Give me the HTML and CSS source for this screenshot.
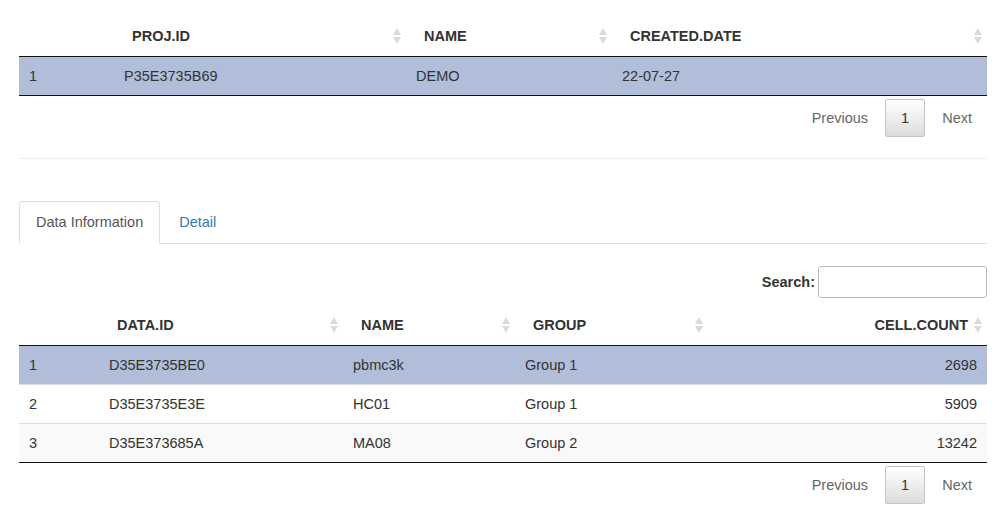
FILE: index.html
```html
<!DOCTYPE html>
<html lang="en">
<head>
<meta charset="utf-8">
<title>Project</title>
<link rel="stylesheet" href="styles.css">
</head>
<body>
<div class="page">
  <div class="dt-wrapper">
    <table class="dt dt-proj">
      <colgroup><col class="c-p0"><col class="c-p1"><col class="c-p2"><col class="c-p3"></colgroup>
      <thead>
        <tr><th></th><th class="sort">PROJ.ID</th><th class="sort">NAME</th><th class="sort">CREATED.DATE</th></tr>
      </thead>
      <tbody>
        <tr class="selected"><td>1</td><td>P35E3735B69</td><td>DEMO</td><td>22-07-27</td></tr>
      </tbody>
    </table>
    <div class="paging">
      <span class="pg-btn disabled">Previous</span>
      <span class="pg-btn current">1</span>
      <span class="pg-btn disabled">Next</span>
    </div>
  </div>

  <hr class="sep">

  <ul class="tabs">
    <li class="tab active"><a>Data Information</a></li>
    <li class="tab"><a>Detail</a></li>
  </ul>

  <div class="tab-content">
    <div class="dt-wrapper">
      <div class="filter">
        <label class="filter-label">Search:</label>
        <input class="filter-input" type="search">
      </div>
      <table class="dt dt-data">
        <colgroup><col class="c-d0"><col class="c-d1"><col class="c-d2"><col class="c-d3"><col class="c-d4"></colgroup>
        <thead>
          <tr><th></th><th class="sort">DATA.ID</th><th class="sort">NAME</th><th class="sort">GROUP</th><th class="sort num">CELL.COUNT</th></tr>
        </thead>
        <tbody>
          <tr class="selected"><td>1</td><td>D35E3735BE0</td><td>pbmc3k</td><td>Group 1</td><td class="num">2698</td></tr>
          <tr class="even"><td>2</td><td>D35E3735E3E</td><td>HC01</td><td>Group 1</td><td class="num">5909</td></tr>
          <tr class="odd"><td>3</td><td>D35E373685A</td><td>MA08</td><td>Group 2</td><td class="num">13242</td></tr>
        </tbody>
      </table>
      <div class="paging">
        <span class="pg-btn disabled">Previous</span>
        <span class="pg-btn current">1</span>
        <span class="pg-btn disabled">Next</span>
      </div>
    </div>
  </div>
</div>
</body>
</html>
```
FILE: styles.css
```css
* { box-sizing: border-box; }

html, body {
  margin: 0;
  padding: 0;
  background: #fff;
}

body {
  font-family: "Liberation Sans", Arial, Helvetica, sans-serif;
  font-size: 14.5px;
  line-height: 20px;
  color: #333;
}

.page {
  width: 968px;
  margin-left: 19px;
  padding-top: 16px;
}

/* ---------- tables ---------- */
.dt {
  width: 968px;
  table-layout: fixed;
  border-collapse: separate;
  border-spacing: 0;
}

.c-p0 { width: 95px; }
.c-p1 { width: 292px; }
.c-p2 { width: 206px; }
.c-p3 { width: 375px; }

.c-d0 { width: 80px; }
.c-d1 { width: 244px; }
.c-d2 { width: 172px; }
.c-d3 { width: 193px; }
.c-d4 { width: 279px; }

.dt th {
  position: relative;
  padding: 10px 18px;
  line-height: 20px;
  text-align: left;
  font-weight: bold;
  color: #333;
  border-bottom: 1px solid #111;
  white-space: nowrap;
}

.dt th.num { text-align: right; padding-right: 19px; }

.dt th.sort::before,
.dt th.sort::after {
  content: "";
  position: absolute;
  right: 5px;
  width: 0;
  height: 0;
  border-left: 4px solid transparent;
  border-right: 4px solid transparent;
}

.dt th.sort::before {
  top: calc(50% - 8px);
  border-bottom: 7px solid #dadada;
}

.dt th.sort::after {
  top: calc(50% + 1px);
  border-top: 7px solid #dadada;
}

.dt td {
  padding: 8px 10px;
  line-height: 22px;
  white-space: nowrap;
  overflow: hidden;
}

.dt td.num { text-align: right; }

.dt tbody tr + tr td { border-top: 1px solid #ddd; }

.dt tbody tr:last-child td { border-bottom: 1px solid #111; }

.dt tbody tr.odd { background: #f9f9f9; }
.dt tbody tr.even { background: #fff; }
.dt tbody tr.selected { background: #b0bed9; }

/* ---------- paging ---------- */
.paging {
  display: flex;
  justify-content: flex-end;
  padding-top: 3px;
}

.pg-btn {
  display: inline-block;
  min-width: 1.5em;
  margin-left: 2px;
  padding: 8px 14px;
  line-height: 20px;
  text-align: center;
  border: 1px solid transparent;
  border-radius: 2px;
  color: #666;
}

.pg-btn:first-child { margin-left: 0; }

.pg-btn.current {
  color: #333;
  padding-left: 15px;
  padding-right: 15px;
  border-color: #c4c4c4;
  background: linear-gradient(to bottom, #fff 0%, #dcdcdc 100%);
}

/* ---------- separator ---------- */
.sep {
  margin: 21px 0 42px;
  border: 0;
  border-top: 1px solid #eee;
  height: 0;
}

/* ---------- tabs ---------- */
.tabs {
  display: flex;
  list-style: none;
  margin: 0;
  padding: 0;
  border-bottom: 1px solid #ddd;
}

.tab {
  margin-right: 2px;
  margin-bottom: -1px;
}

.tab a {
  display: block;
  padding: 10px 16px;
  line-height: 21px;
  border: 1px solid transparent;
  border-radius: 4px 4px 0 0;
  color: #337ab7;
}

.tab.active a {
  color: #555;
  background: #fff;
  border-color: #ddd;
  border-bottom-color: transparent;
}

/* ---------- filter ---------- */
.filter {
  display: flex;
  justify-content: flex-end;
  align-items: center;
  margin-top: 22px;
  margin-bottom: 7px;
}

.filter-label {
  font-weight: bold;
  color: #333;
}

.filter-input {
  margin-left: 3px;
  width: 169px;
  height: 32px;
  padding: 5px;
  border: 1px solid #bbb;
  border-radius: 3px;
  background: #fff;
  font: inherit;
}
```
